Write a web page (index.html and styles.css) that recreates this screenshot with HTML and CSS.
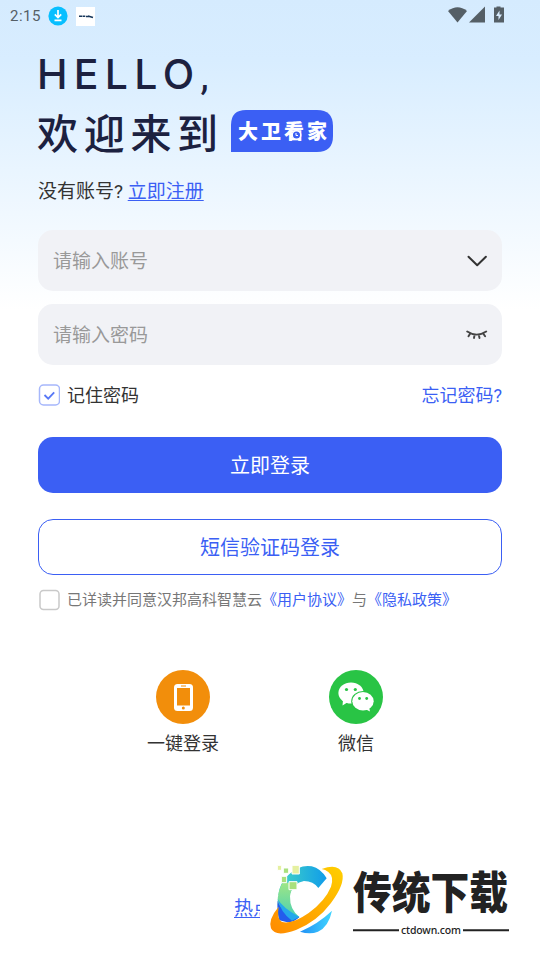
FILE: index.html
```html
<!DOCTYPE html>
<html lang="zh-CN">
<head>
<meta charset="utf-8">
<title>登录</title>
<link rel="stylesheet" href="styles.css">
</head>
<body>
<div class="screen">
  <header class="status">
    <span class="time">2:15</span>
    <svg class="download" width="20" height="20" viewBox="0 0 20 20"><circle cx="10" cy="10" r="9.6" fill="#08bfff"/><path d="M10 4v7M6.8 8.4 10 11.6l3.2-3.2M6.5 14.3h7" fill="none" stroke="#fff" stroke-width="1.7"/></svg>
    <svg class="notice" width="19" height="19" viewBox="0 0 19 19"><path fill="#fff" d="M0 0h19v19H0z"/><path d="M3 9.2h3M6.5 9.3h2.8M10 9.5h3M12 8.900l5 1.500" stroke="#17375b" stroke-width="1.6"/></svg>
    <svg class="signals" width="60" height="20" viewBox="0 0 60 20"><g fill="#555f66"><path d="M0 5Q9.500-2.500 19 5L9.500 16.500Z"/><path d="M21 16.500 37 .5v16z"/><path d="M48.500 1.500V.5h4v1H56v15H46v-15z"/></g><path d="m51.500 4.500-3.500 5.500h2.500v4l3.500-5.500h-2.500z" fill="#d8ecfe"/></svg>
  </header>
  <main>
    <h1 class="hello">HELLO<span>,</span></h1>
    <div class="welcome">
      <span class="welcome-text">欢迎来到</span>
      <svg class="brand" width="102" height="42" viewBox="0 0 102 42"><path d="M0 42V15Q0 0 15 0H86Q102 0 102 16V26Q102 42 86 42Z" fill="#3b5ff4"/><g class="brand-text"><text x="7" y="28.500">大</text><text x="30" y="28.500">卫</text><text x="53" y="28.500">看</text><text x="76" y="28.500">家</text></g><circle cx="65.500" cy="25" r="4.300" fill="#3b5ff4" stroke="#fff" stroke-width="1.500"/><path d="M65 23v2.500h2" fill="none" stroke="#fff"/></svg>
    </div>
    <p class="register">没有账号? <a>立即注册</a></p>
    <div class="field"><span>请输入账号</span><svg width="22" height="22" viewBox="0 0 22 22"><path d="m2.500 6.700 8.700 8.500 8.700-8.500" fill="none" stroke="#333" stroke-width="2" stroke-linecap="round" stroke-linejoin="round"/></svg></div>
    <div class="field"><span>请输入密码</span><svg width="22" height="22" viewBox="0 0 22 22"><path d="M1.200 7.500q9.500 6.200 19 0M4.200 9.500l-1.700 2.800M8.600 10.800 8 14M12.800 10.800l.7 3.200M17.200 9.500l1.900 2.800" fill="none" stroke="#444" stroke-width="1.900" stroke-linecap="round"/></svg></div>
    <div class="options">
      <svg width="22" height="22" viewBox="0 0 22 22"><rect x="1.500" y="1" width="20" height="20" rx="4" fill="#fff" stroke="#a6b7fb" stroke-width="1.500"/><path d="m6.500 11 3.700 3.700 6-6.400" fill="none" stroke="#5878f6" stroke-width="1.800"/></svg>
      <span>记住密码</span><a class="forgot">忘记密码?</a>
    </div>
    <div class="button primary">立即登录</div>
    <div class="button outline">短信验证码登录</div>
    <div class="agreement">
      <svg width="22" height="22" viewBox="0 0 22 22"><rect x="2" y="1.500" width="19" height="19" rx="3.500" fill="#fff" stroke="#c9c9c9" stroke-width="1.500"/></svg>
      <span>已详读并同意汉邦高科智慧云<a>《用户协议》</a>与<a>《隐私政策》</a></span>
    </div>
    <div class="methods">
      <div class="method"><svg width="54" height="54" viewBox="0 0 54 54"><circle cx="27" cy="27" r="27" fill="#f28e0b"/><rect x="18" y="14" width="19" height="27" rx="3.500" fill="#fff"/><path d="M21 18h13v17.500H21z" fill="#f28e0b"/><path d="M25 16h5" stroke="#f28e0b"/><circle cx="27.300" cy="38" r="1.500" fill="#f28e0b"/></svg><span>一键登录</span></div>
      <div class="method"><svg width="54" height="54" viewBox="0 0 54 54"><circle cx="27" cy="27" r="27" fill="#29c445"/><path d="M14 30 13.500 35.500 19 32z" fill="#fff"/><ellipse cx="22" cy="23" rx="12.600" ry="10.500" fill="#fff"/><ellipse cx="34" cy="31.300" rx="11.800" ry="10.300" fill="#29c445"/><ellipse cx="34" cy="31.300" rx="10.700" ry="9.200" fill="#fff"/><path d="m36 39 5 2.500-1-4.500z" fill="#fff"/><g fill="#29c445"><circle cx="17.500" cy="19.500" r="1.600"/><circle cx="26.300" cy="19.500" r="1.600"/><circle cx="30.500" cy="28.500" r="1.400"/><circle cx="37.700" cy="28.500" r="1.400"/></g></svg><span>微信</span></div>
    </div>
    <a class="hotspot">热点</a>
  </main>
  <svg class="watermark" width="280" height="100" viewBox="260 860 280 100">
    <defs>
      <linearGradient id="gold" x1="1" y1="0" x2="0" y2="1"><stop stop-color="#ffcf00"/><stop offset="1" stop-color="#ff8a00"/></linearGradient>
      <linearGradient id="blue"><stop stop-color="#43d5c4"/><stop offset="1" stop-color="#109cea"/></linearGradient>
      <linearGradient id="green" x1="0" y1="0" x2="0" y2="1"><stop stop-color="#a5e782"/><stop offset="1" stop-color="#45cfb5"/></linearGradient>
      <linearGradient id="deep" x1="0" y1="0" x2="1" y2="0"><stop stop-color="#2090f5"/><stop offset="1" stop-color="#41d5ff"/></linearGradient>
    </defs>
    <path fill="#fff" d="M260 860h280v100H260z"/>
    <g transform="translate(220 855) scale(.33333)">
      <path d="M205 60Q238 28 275 34Q302 40 320 70L295 99Q280 78 252 78Q220 84 211 115L175 120Q178 85 205 60Z" fill="url(#blue)"/>
      <path d="M192 76Q170 110 173 150Q185 180 220 195L238 186Q209 164 210 124Q213 95 236 82Q205 92 192 76Z" fill="url(#green)"/>
      <path d="M173 137Q184 174 238 186Q224 202 202 202L178 196Q170 170 173 137Z" fill="#245dec"/>
      <path d="M173 132Q187 158 238 186L216 197Q182 173 173 132Z" fill="#25a8eb"/>
      <path d="M240 230Q295 206 336 167Q326 215 294 230Q270 239 240 230Z" fill="url(#deep)"/>
      <path d="M305 42Q355 24 367 55Q375 88 333 144Q292 199 228 225Q166 248 153 220Q144 193 176 155Q170 191 185 200Q214 210 266 174Q316 137 333 95Q343 65 325 51Q316 44 305 42Z" fill="url(#gold)"/>
      <g stroke="#fff" stroke-width="3"><path fill="#e5f0a0" d="M172 31h13v15h-13zM216 31h22v26h-22z"/><path fill="#a9e07d" d="M190 39h16v16h-16zM184 64h16v19h-16zM207 80h24v24h-24z"/></g>
    </g>
    <text class="mark-title" transform="translate(353 909) scale(.97 1.120)">传统下载</text>
    <path d="M353 930.300h46M463 930.300h46" stroke="#222" stroke-width="2"/>
    <text class="mark-url" x="401" y="934" textLength="60">ctdown.com</text>
  </svg>
</div>
</body>
</html>
```
FILE: styles.css
```css
* { box-sizing: border-box; }
body { margin: 0; font-family: Roboto, "Noto Sans CJK SC", sans-serif; color: #333; }
svg { display: block; flex: none; }
a { color: #3b5ff4; }
.screen { position: relative; width: 540px; height: 960px; overflow: hidden; background: linear-gradient(#d5ebfe 0, #d8edff 60px, #fff 310px); }
.status { height: 32px; display: flex; align-items: center; padding: 0 32px 0 10px; }
.time { width: 38px; font-size: 15px; font-weight: 400; letter-spacing: .5px; color: #555f66; }
.notice { margin-left: 8px; }
.signals { margin-left: auto; }
main { padding: 0 38px; }
.hello { margin: 12px 0 0 -1px; height: 60px; font: 450 41px/60px Inter, sans-serif; letter-spacing: 6.300px; color: #1c2140; white-space: nowrap; }
.hello span { font-family: Roboto, sans-serif; }
.welcome { height: 54px; display: flex; align-items: center; }
.welcome-text { width: 193px; white-space: nowrap; font: 500 41px/54px "Noto Sans CJK SC", sans-serif; letter-spacing: 5.700px; color: #1c2140; margin-left: -1px; padding-bottom: 1px; }
.brand { margin-left: 1px; }
.brand-text { font: 900 20px "Noto Sans CJK SC", sans-serif; fill: #fff; }
.register { margin: 19px 0 24px; font-size: 19px; line-height: 29px; }
.register a { text-decoration: underline; text-decoration-thickness: 1px; text-underline-offset: 2px; }
.field { height: 61px; margin-bottom: 13px; padding: 0 14px 0 15px; border-radius: 15px; background: #f1f2f6; display: flex; align-items: center; justify-content: space-between; font-size: 19px; color: #999; }
.field span { padding-bottom: 2px; }
.options { height: 36px; margin-top: -1px; display: flex; align-items: center; font-size: 18px; }
.options span { margin-left: 7px; padding-bottom: 2px; }
.forgot { margin-left: auto; padding-bottom: 2px; }
.button { height: 56px; padding-bottom: 2px; border-radius: 15px; display: flex; align-items: center; justify-content: center; font-size: 20px; }
.primary { margin-top: 24px; background: #3b5ff4; color: #fff; }
.outline { margin-top: 26px; border: 1px solid #3b5ff4; background: #fff; color: #3b5ff4; }
.agreement { height: 22px; margin-top: 14px; display: flex; align-items: center; font-size: 15px; color: #777; }
.agreement span { margin-left: 7px; padding-bottom: 3px; white-space: nowrap; }
.methods { margin-top: 59px; padding: 0 60px 0 59px; display: flex; justify-content: space-between; }
.method { width: 172px; display: flex; flex-direction: column; align-items: center; font-size: 18px; line-height: 26px; gap: 7px; }
.hotspot { display: block; margin: 138px 0 0 196px; width: 26px; overflow: hidden; white-space: nowrap; font-size: 19px; line-height: 28px; text-decoration: underline; text-decoration-thickness: 1px; text-underline-offset: 2px; }
.watermark { position: absolute; left: 260px; top: 860px; }
.mark-title { font: 900 40px "Noto Sans CJK SC", sans-serif; fill: #222; }
.mark-url { font: 500 10.500px "Noto Sans", sans-serif; fill: #222; }
```
